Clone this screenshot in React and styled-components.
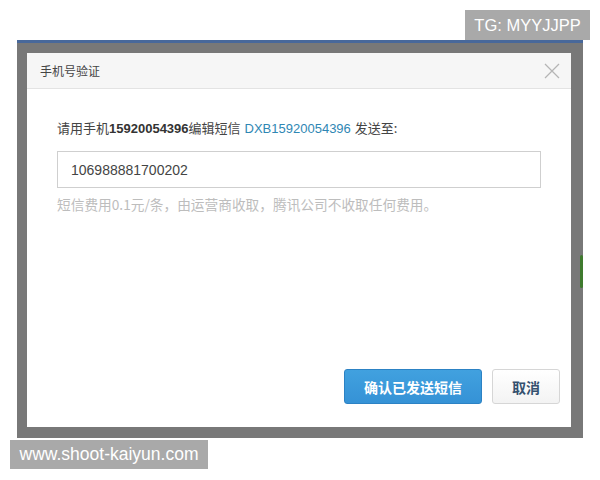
import styled, { createGlobalStyle } from 'styled-components';

const GlobalStyle = createGlobalStyle`
  html, body {
    margin: 0;
    padding: 0;
    background: #ffffff;
  }
  body {
    font-family: 'Liberation Sans', 'Noto Sans CJK SC', sans-serif;
    width: 600px;
    height: 480px;
    overflow: hidden;
    position: relative;
  }
`;

const Page = styled.div`
  width: 600px;
  height: 480px;
  padding: 40px 0 0 17px;
  box-sizing: border-box;
`;

const Screen = styled.div`
  width: 566px;
  height: 398px;
  box-sizing: border-box;
  background: #787878;
  border-top: 3px solid #48689a;
  padding: 10px 12px 11px 10px;
  display: flex;
`;

const Dialog = styled.div`
  flex: 1;
  background: #ffffff;
  display: flex;
  flex-direction: column;
`;

const Header = styled.div`
  height: 35px;
  flex-shrink: 0;
  background: #f6f6f6;
  border-bottom: 1px solid #e3e3e3;
  display: flex;
  align-items: center;
  justify-content: space-between;
  padding: 0 10px 0 13px;
`;

const Title = styled.span`
  font-size: 12px;
  color: #444;
  font-family: 'Noto Sans CJK SC', sans-serif;
`;

const Close = styled.button`
  border: none;
  background: none;
  padding: 0;
  width: 18px;
  height: 18px;
  display: flex;
  align-items: center;
  justify-content: center;
  cursor: pointer;
`;

const Body = styled.div`
  flex: 1;
  padding: 30px 30px 0 30px;
  display: flex;
  flex-direction: column;
`;

const Prompt = styled.p`
  margin: 0;
  font-size: 13px;
  line-height: 18px;
  color: #444;
  font-family: 'Noto Sans CJK SC', sans-serif;

  b {
    font-family: 'Liberation Sans', sans-serif;
    font-weight: 700;
    color: #333;
  }
`;

const Code = styled.span`
  color: #2f87b4;
  font-family: 'Liberation Sans', sans-serif;
  margin: 0 4px;
`;

const Field = styled.input`
  margin-top: 13px;
  width: 484px;
  height: 37px;
  box-sizing: border-box;
  border: 1px solid #cfcfcf;
  padding: 0 13px;
  font-size: 14px;
  color: #444;
  font-family: 'Liberation Sans', sans-serif;
  outline: none;
`;

const Hint = styled.p`
  margin: 8px 0 0;
  font-size: 13.7px;
  line-height: 16px;
  color: #bdbdbd;
  font-family: 'Noto Sans CJK SC', sans-serif;
`;

const Footer = styled.div`
  display: flex;
  justify-content: flex-end;
  gap: 10px;
  padding: 0 11px 23px 0;
`;

const Button = styled.button`
  height: 35px;
  width: ${(p) => (p.$primary ? '138px' : '68px')};
  border-radius: 3px;
  font-size: 14px;
  font-weight: 700;
  font-family: 'Noto Sans CJK SC', sans-serif;
  cursor: pointer;
  border: 1px solid ${(p) => (p.$primary ? '#2c82c4' : '#d6d6d6')};
  color: ${(p) => (p.$primary ? '#ffffff' : '#34506f')};
  background: ${(p) =>
    p.$primary
      ? 'linear-gradient(#41a1df, #3592d6)'
      : 'linear-gradient(#ffffff, #f3f3f3)'};
`;

const Stamp = styled.div`
  position: absolute;
  background: #a9a9a9;
  color: #ffffff;
  font-family: 'Liberation Sans', sans-serif;
  display: flex;
  align-items: center;
  justify-content: center;
`;

const TopStamp = styled(Stamp)`
  top: 10px;
  left: 465px;
  width: 125px;
  height: 30px;
  font-size: 16.5px;
`;

const BottomStamp = styled(Stamp)`
  top: 440px;
  left: 10px;
  width: 198px;
  height: 29px;
  font-size: 17.5px;
`;

const Blob = styled.div`
  position: absolute;
  left: 580px;
  top: 255px;
  width: 3px;
  height: 33px;
  background: #3f7a2e;
  border-radius: 2px;
`;

export default function App() {
  return (
    <>
      <GlobalStyle />
      <Page>
        <Screen>
          <Dialog>
            <Header>
              <Title>手机号验证</Title>
              <Close aria-label="close">
                <svg width="16" height="16" viewBox="0 0 16 16">
                  <path d="M1 1 L15 15 M15 1 L1 15" stroke="#b5b5b5" strokeWidth="1.3" fill="none" />
                </svg>
              </Close>
            </Header>
            <Body>
              <Prompt>
                请用手机<b>15920054396</b>编辑短信<Code>DXB15920054396</Code>发送至:
              </Prompt>
              <Field defaultValue="106988881700202" />
              <Hint>短信费用0.1元/条，由运营商收取，腾讯公司不收取任何费用。</Hint>
            </Body>
            <Footer>
              <Button $primary>确认已发送短信</Button>
              <Button>取消</Button>
            </Footer>
          </Dialog>
        </Screen>
      </Page>
      <Blob />
      <TopStamp>TG: MYYJJPP</TopStamp>
      <BottomStamp>www.shoot-kaiyun.com</BottomStamp>
    </>
  );
}
